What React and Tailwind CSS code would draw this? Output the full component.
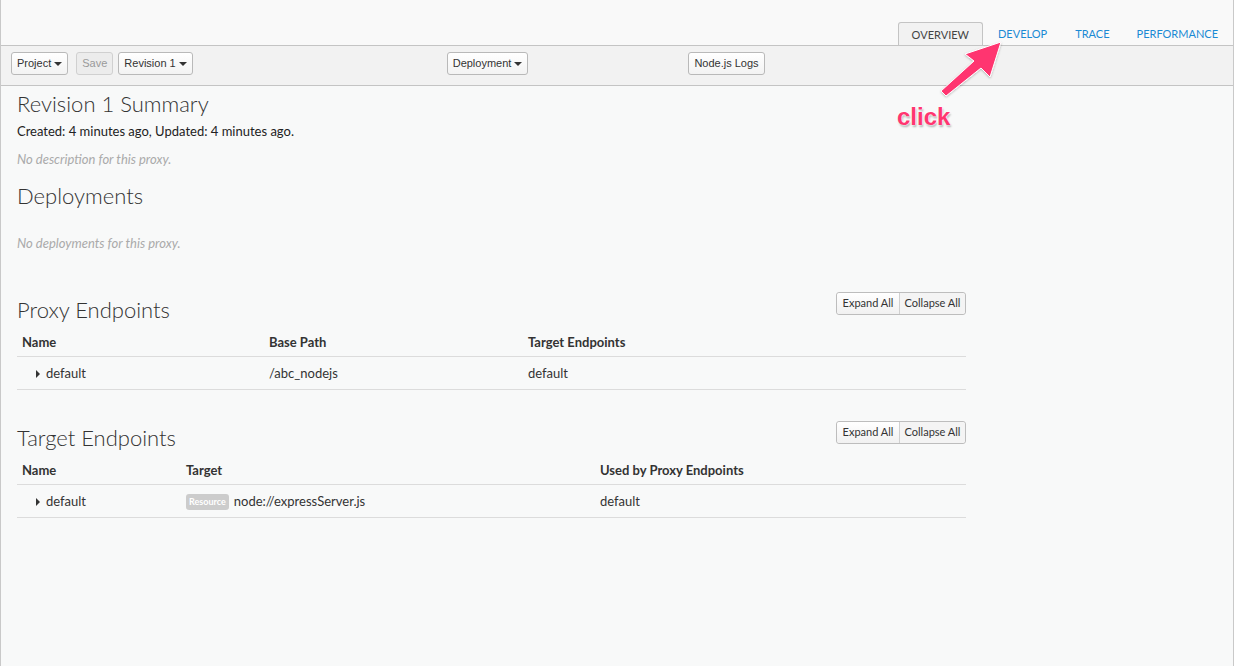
import React from "react";

const lato = { fontFamily: "Lato, 'Open Sans', sans-serif" };
const helv = { fontFamily: "'Liberation Sans', Arial, sans-serif" };

function Caret() {
  return <span className="ml-[3px] inline-block h-0 w-0 border-x-[4px] border-t-[4px] border-x-transparent border-t-[#333]" />;
}

function ToolButton({ children, disabled, caret }) {
  return (
    <button
      type="button"
      style={helv}
      className={`flex h-[23px] items-center rounded-[3px] border px-[5px] text-[11px] ${
        disabled
          ? "border-[#d0d0d0] bg-[#ececec] text-[#9a9a9a]"
          : "border-[#b9b9b9] bg-gradient-to-b from-white to-[#f3f3f3] text-[#333]"
      }`}
    >
      {children}
      {caret ? <Caret /> : null}
    </button>
  );
}

function ExpandCollapse() {
  return (
    <div style={lato} className="flex h-[23px] rounded-[3px] border border-[#bdbdbd] text-[11px] text-[#333]">
      <button type="button" className="w-[62px] rounded-l-[3px] bg-gradient-to-b from-white to-[#f1f1f1]">
        Expand All
      </button>
      <button type="button" className="w-[66px] rounded-r-[3px] border-l border-[#d0d0d0] bg-[#f4f4f4]">
        Collapse All
      </button>
    </div>
  );
}

function RowCaret() {
  return <span className="mr-[6px] inline-block h-0 w-0 border-y-[4px] border-l-[4px] border-y-transparent border-l-[#333]" />;
}

function EndpointTable({ cols, headers, cells }) {
  return (
    <div style={lato} className="text-[13px] text-[#333]">
      <div className={`grid h-[29px] items-center border-b border-[#dcdcdc] pt-[2px] font-bold ${cols}`}>
        {headers.map((h) => (
          <div key={h} className="px-[5px]">
            {h}
          </div>
        ))}
      </div>
      <div className={`grid h-[33px] items-center border-b border-[#dcdcdc] pt-[2px] ${cols}`}>
        {cells.map((c, i) => (
          <div key={i} className="flex items-center px-[5px]">
            {c}
          </div>
        ))}
      </div>
    </div>
  );
}

export default function App() {
  return (
    <div className="relative min-h-screen border-x border-[#c9c9c9] bg-[#f8f9f9]">
      {/* tabs */}
      <div style={lato} className="flex h-[45px] items-end justify-end bg-[#f9f9f9] pr-[1px] text-[11px] uppercase">
        <div className="flex h-[23px] items-center rounded-t-[3px] border border-b-0 border-[#c4c4c4] bg-[#f2f2f2] px-[13px] pt-[2px] text-[#444]">
          Overview
        </div>
        <div className="flex h-[23px] items-center px-[15px] pt-[2px] text-[#1a8ad4]">Develop</div>
        <div className="flex h-[23px] items-center px-[13px] pt-[2px] text-[#1a8ad4]">Trace</div>
        <div className="flex h-[23px] items-center px-[14px] pt-[2px] text-[#1a8ad4]">Performance</div>
      </div>

      {/* toolbar */}
      <div className="flex h-[41px] items-start border-y border-[#c4c4c4] bg-[#f2f2f2] pl-[10px] pt-[6px]">
        <ToolButton caret>Project</ToolButton>
        <div className="ml-[8px]">
          <ToolButton disabled>Save</ToolButton>
        </div>
        <div className="ml-[5px]">
          <ToolButton caret>Revision 1</ToolButton>
        </div>
        <div className="ml-[254px]">
          <ToolButton caret>Deployment</ToolButton>
        </div>
        <div className="ml-[160px]">
          <ToolButton>Node.js Logs</ToolButton>
        </div>
      </div>

      {/* content */}
      <div style={lato} className="w-[965px] pl-[16px] text-[#333]">
        <h1 className="h-[36px] text-[22px] font-light leading-[36px] text-[#333]">Revision 1 Summary</h1>
        <p className="h-[18px] text-[13px] leading-[18px] text-[#222]">Created: 4 minutes ago, Updated: 4 minutes ago.</p>
        <p className="mt-[10px] h-[18px] text-[13px] italic leading-[18px] text-[#aaa]">No description for this proxy.</p>

        <h2 className="mt-[10px] h-[36px] text-[22px] font-light leading-[36px]">Deployments</h2>
        <p className="mt-[20px] h-[18px] text-[13px] italic leading-[18px] text-[#aaa]">No deployments for this proxy.</p>

        <div className="mt-[40px] flex items-start justify-between">
          <h2 className="h-[36px] text-[22px] font-light leading-[36px]">Proxy Endpoints</h2>
          <ExpandCollapse />
        </div>
        <EndpointTable
          cols="grid-cols-[247px_259px_1fr]"
          headers={["Name", "Base Path", "Target Endpoints"]}
          cells={[
            <span className="ml-[14px] flex items-center">
              <RowCaret />
              default
            </span>,
            "/abc_nodejs",
            "default",
          ]}
        />

        <div className="mt-[30px] flex items-start justify-between">
          <h2 className="h-[36px] text-[22px] font-light leading-[36px]">Target Endpoints</h2>
          <div className="mt-[1px]">
            <ExpandCollapse />
          </div>
        </div>
        <EndpointTable
          cols="grid-cols-[164px_414px_1fr]"
          headers={["Name", "Target", "Used by Proxy Endpoints"]}
          cells={[
            <span className="ml-[14px] flex items-center">
              <RowCaret />
              default
            </span>,
            <span className="flex items-center">
              <span className="mr-[5px] flex h-[16px] items-center rounded-[3px] bg-[#cccccc] px-[3px] text-[9px] font-bold text-white">
                Resource
              </span>
              node://expressServer.js
            </span>,
            "default",
          ]}
        />
      </div>

      {/* annotation overlay */}
      <svg className="pointer-events-none absolute left-0 top-0" width="1234" height="140" viewBox="0 0 1234 140">
        <defs>
          <filter id="glow" x="-20%" y="-20%" width="140%" height="140%">
            <feDropShadow dx="0" dy="1" stdDeviation="1" floodColor="#000" floodOpacity="0.25" />
          </filter>
        </defs>
        <polygon
          points="1000,42 989,77 980,68 945,96 940,91 973,61 964,54"
          fill="#ff3670"
          stroke="#ffffff"
          strokeWidth="1"
          strokeLinejoin="round"
          filter="url(#glow)"
        />
      </svg>
      <div
        style={{ ...helv, textShadow: "0 0 2px #fff, 0 0 2px #fff, 1px 2px 2px rgba(0,0,0,0.3)" }}
        className="pointer-events-none absolute left-[896px] top-[99px] text-[24px] font-bold text-[#ff3670]"
      >
        click
      </div>
    </div>
  );
}
